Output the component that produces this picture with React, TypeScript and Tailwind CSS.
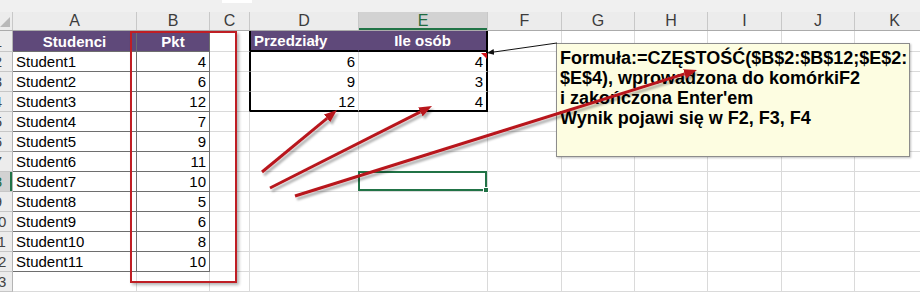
import React from 'react';

const PURPLE = 'bg-[#5f497a]';

const COLS = [
  { id: 'A', w: 'w-[124px]' },
  { id: 'B', w: 'w-[73px]' },
  { id: 'C', w: 'w-[40px]' },
  { id: 'D', w: 'w-[109px]' },
  { id: 'E', w: 'w-[129px]' },
  { id: 'F', w: 'w-[74px]' },
  { id: 'G', w: 'w-[73px]' },
  { id: 'H', w: 'w-[73px]' },
  { id: 'I', w: 'w-[74px]' },
  { id: 'J', w: 'w-[73px]' },
  { id: 'K', w: 'w-[80px]' },
];

const students: [string, number][] = [
  ['Student1', 4],
  ['Student2', 6],
  ['Student3', 12],
  ['Student4', 7],
  ['Student5', 9],
  ['Student6', 11],
  ['Student7', 10],
  ['Student8', 5],
  ['Student9', 6],
  ['Student10', 8],
  ['Student11', 10],
];

const bins = [6, 9, 12];
const counts = [4, 3, 4];

const SEL_ROW = 8;
const SEL_COL = 'E';

// value shown in a cell, row numbers start at 1 like the sheet
function cellValue(col: string, r: number): string | number {
  if (r === 1) {
    if (col === 'A') return 'Studenci';
    if (col === 'B') return 'Pkt';
    if (col === 'D') return 'Przedziały';
    if (col === 'E') return 'Ile osób';
    return '';
  }
  if (r >= 2 && r <= 12) {
    if (col === 'A') return students[r - 2][0];
    if (col === 'B') return students[r - 2][1];
  }
  if (r >= 2 && r <= 4) {
    if (col === 'D') return bins[r - 2];
    if (col === 'E') return counts[r - 2];
  }
  return '';
}

function cellClass(col: string, r: number): string {
  let right = 'border-r border-r-[#dadada]';
  let bottom = 'border-b border-b-[#dadada]';
  let left = '';
  let look = 'text-black';
  let align = typeof cellValue(col, r) === 'number' ? 'justify-end' : 'justify-start';

  const inStudents = (col === 'A' || col === 'B') && r <= 12;
  const inBins = (col === 'D' || col === 'E') && r <= 4;

  if (inStudents) {
    right = 'border-r border-r-[#6e6e6e]';
    bottom = 'border-b border-b-[#6e6e6e]';
    if (r === 1) {
      look = `${PURPLE} text-white font-bold`;
      align = 'justify-center';
    }
  }
  if (col === 'C' && r <= 4) right = 'border-r border-r-black';
  if (inBins) {
    if (col === 'D') {
      left = 'border-l border-l-black';
      right = r === 1 ? 'border-r border-r-[#5f497a]' : 'border-r border-r-[#dadada]';
    } else {
      right = 'border-r-2 border-r-black';
    }
    if (r === 1 || r === 4) bottom = 'border-b-2 border-b-black';
    if (r === 1) {
      look = `${PURPLE} text-white font-bold`;
      align = col === 'D' ? 'justify-start' : 'justify-center';
    }
  }
  return `h-full shrink-0 flex items-center px-[3px] whitespace-nowrap ${left} ${right} ${bottom} ${look} ${align}`;
}

function RowHeader({ r }: { r: number }) {
  const sel = r === SEL_ROW;
  return (
    <div
      className={`w-[13px] h-full shrink-0 overflow-hidden border-b border-b-[#c6c6c6] border-r border-r-[#b4b4b4] flex items-center ${
        sel ? 'bg-[#d2d2d2] text-[#1e6b40] shadow-[inset_-2px_0_0_#217346]' : 'bg-[#ececec] text-[#444]'
      }`}
    >
      <div className="w-[30px] ml-[-17px] shrink-0 text-center">{r}</div>
    </div>
  );
}

function SheetRow({ r }: { r: number }) {
  return (
    <div className={`flex ${r === 1 ? 'h-[21px]' : 'h-[20px]'}`}>
      <RowHeader r={r} />
      {COLS.map((c) => {
        const v = cellValue(c.id, r);
        const selected = c.id === SEL_COL && r === SEL_ROW;
        return (
          <div key={c.id} className={`${c.w} ${cellClass(c.id, r)} ${selected ? 'relative' : ''}`}>
            {v}
            {selected && (
              <div className="absolute left-[-1px] top-[-1px] right-0 bottom-0 border-2 border-[#217346]">
                <div className="absolute right-[-4px] bottom-[-4px] w-[6px] h-[6px] bg-[#217346] border border-white" />
              </div>
            )}
          </div>
        );
      })}
    </div>
  );
}

export default function App() {
  const rows = Array.from({ length: 13 }, (_, i) => i + 1);

  return (
    <div className="relative w-[920px] h-[292px] overflow-hidden bg-white font-['Liberation_Sans',Arial,sans-serif] text-[15px] leading-none">
      {/* formula bar edge */}
      <div className="h-[12px] bg-[#f0f0f0] flex">
        <div className="w-[222px]" />
        <div className="w-[30px] h-[3px] bg-white" />
      </div>

      {/* column letters */}
      <div className="flex h-[19px] bg-[#ececec] border-b border-b-[#ababab]">
        <div className="w-[13px] shrink-0 h-full border-r border-r-[#c8c8c8] flex items-end justify-end pb-[3px] pr-[2px]">
          <svg width="10" height="10" viewBox="0 0 10 10">
            <polygon points="10,0 10,10 0,10" fill="#b9b9b9" />
          </svg>
        </div>
        {COLS.map((c) => (
          <div
            key={c.id}
            className={`${c.w} h-full shrink-0 flex items-center justify-center border-r border-r-[#c8c8c8] text-[16px] ${
              c.id === SEL_COL ? 'bg-[#d2d2d2] text-[#1e6b40] shadow-[inset_0_-2px_0_#217346]' : 'text-[#3c3c3c]'
            }`}
          >
            {c.id}
          </div>
        ))}
      </div>

      {rows.map((r) => (
        <SheetRow key={r} r={r} />
      ))}

      {/* red frame around Pkt */}
      <div className="absolute left-[130px] top-[31px] w-[107px] h-[252px] border-2 border-[#bf1e24] shadow-[2px_2px_3px_rgba(0,0,0,0.3)]" />

      {/* comment box */}
      <div className="absolute left-[556px] top-[43px] w-[354px] h-[114px] bg-[#fdfde1] border border-[#8c8c8c] shadow-[1px_1px_2px_rgba(0,0,0,0.25)] px-[3px] pt-[4px] text-[18px] leading-[20px] font-bold text-black whitespace-nowrap">
        <div>Formuła:=CZĘSTOŚĆ($B$2:$B$12;$E$2:</div>
        <div>$E$4), wprowadzona do komórkiF2</div>
        <div>i zakończona Enter'em</div>
        <div>Wynik pojawi się w F2, F3, F4</div>
      </div>

      {/* arrows */}
      <svg className="absolute left-0 top-0 pointer-events-none" width="920" height="292" viewBox="0 0 920 292">
        <defs>
          <marker id="redHead" viewBox="0 0 13 10" refX="0" refY="5" markerWidth="13" markerHeight="10" markerUnits="userSpaceOnUse" orient="auto">
            <path d="M0,0 L13,5 L0,10 z" fill="#b8161d" />
          </marker>
          <marker id="blackHead" viewBox="0 0 7 6" refX="0" refY="3" markerWidth="7" markerHeight="6" markerUnits="userSpaceOnUse" orient="auto">
            <path d="M0,0 L7,3 L0,6 z" fill="#111" />
          </marker>
          <filter id="soft" x="-10%" y="-10%" width="130%" height="140%">
            <feDropShadow dx="2" dy="3" stdDeviation="1.2" floodColor="#000" floodOpacity="0.3" />
          </filter>
        </defs>

        {/* comment indicator on E2 */}
        <polygon points="481,53 487,53 487,59" fill="#d0121b" />

        <line x1="557" y1="43" x2="494" y2="52" stroke="#111" strokeWidth="1" markerEnd="url(#blackHead)" />

        <g filter="url(#soft)" stroke="#b8161d" strokeWidth="3" fill="none">
          <line x1="262" y1="172" x2="327" y2="118.3" markerEnd="url(#redHead)" />
          <line x1="270" y1="188" x2="420.4" y2="111.9" markerEnd="url(#redHead)" />
          <line x1="295" y1="196" x2="684.6" y2="73.9" markerEnd="url(#redHead)" />
        </g>
      </svg>
    </div>
  );
}
